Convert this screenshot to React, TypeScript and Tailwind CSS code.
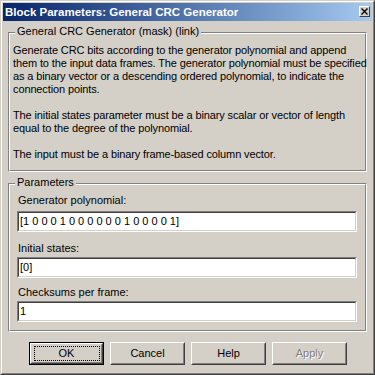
import type { ReactNode } from "react";

const FONT = "font-['Liberation_Sans',Arial,sans-serif]";

function Group({
  legend,
  className,
  children,
}: {
  legend: string;
  className: string;
  children: ReactNode;
}) {
  return (
    <div
      className={`relative border border-t-[#808080] border-l-[#808080] border-b-white border-r-white ${className}`}
    >
      <div className="h-full border border-t-white border-l-white border-b-[#808080] border-r-[#808080]">
        {children}
      </div>
      <span className="absolute left-[6px] top-[-8px] bg-[#d4d0c8] px-[2px] leading-[13px] whitespace-nowrap">
        {legend}
      </span>
    </div>
  );
}

function Edit({ value, className }: { value: string; className: string }) {
  return (
    <div
      className={`h-[21px] border border-t-[#808080] border-l-[#808080] border-b-white border-r-white ${className}`}
    >
      <div className="h-full border border-t-[#404040] border-l-[#404040] border-b-[#d4d0c8] border-r-[#d4d0c8] bg-white pl-[1px] leading-[17px] whitespace-nowrap">
        {value}
      </div>
    </div>
  );
}

function Button({
  label,
  isDefault,
  disabled,
}: {
  label: string;
  isDefault?: boolean;
  disabled?: boolean;
}) {
  const face = (
    <div className="h-full border border-t-white border-l-white border-b-[#404040] border-r-[#404040]">
      <div className="h-full border border-t-[#d4d0c8] border-l-[#d4d0c8] border-b-[#808080] border-r-[#808080] flex items-center justify-center">
        {isDefault ? (
          <div className="w-[66px] h-[15px] border border-dotted border-black flex items-center justify-center leading-[13px]">
            {label}
          </div>
        ) : (
          <span
            className={
              disabled
                ? "text-[#808080] [text-shadow:1px_1px_0_#ffffff] leading-[13px]"
                : "leading-[13px]"
            }
          >
            {label}
          </span>
        )}
      </div>
    </div>
  );
  return (
    <div className="w-[75px] h-[23px]">
      {isDefault ? (
        <div className="h-full border border-black">{face}</div>
      ) : (
        face
      )}
    </div>
  );
}

export default function App() {
  return (
    <div
      className={`w-[375px] h-[375px] bg-[#d4d0c8] text-black text-[11px] ${FONT} border border-t-[#d4d0c8] border-l-[#d4d0c8] border-b-[#404040] border-r-[#404040]`}
    >
      <div className="h-full border border-t-white border-l-white border-b-[#808080] border-r-[#808080] p-[1px] flex flex-col">
        {/* Title bar */}
        <div className="h-[18px] shrink-0 bg-gradient-to-r from-[#0a246a] to-[#a6caf0] flex items-center justify-between pl-[2px] pr-[2px]">
          <span className="text-white font-bold text-[11.5px] leading-[14px] whitespace-nowrap">
            Block Parameters: General CRC Generator
          </span>
          <div className="w-[11px] h-[11px] mb-[2px] border border-t-white border-l-white border-b-[#404040] border-r-[#404040] bg-[#d4d0c8] flex items-center justify-center">
            <svg width="7" height="7" viewBox="0 0 7 7">
              <path d="M0.5 0.5 L6.5 6.5 M6.5 0.5 L0.5 6.5" stroke="#000" strokeWidth="1.4" />
            </svg>
          </div>
        </div>

        {/* Description */}
        <Group
          legend="General CRC Generator (mask) (link)"
          className="mt-[11px] mx-[5px] h-[140px]"
        >
          <div className="pt-[10px] pl-[3px] leading-[13px] whitespace-nowrap tracking-[-0.12px]">
            <div>Generate CRC bits according to the generator polynomial and append</div>
            <div>them to the input data frames. The generator polynomial must be specified</div>
            <div>as a binary vector or a descending ordered polynomial, to indicate the</div>
            <div>connection points.</div>
            <div className="mt-[13px]">
              The initial states parameter must be a binary scalar or vector of length
            </div>
            <div>equal to the degree of the polynomial.</div>
            <div className="mt-[13px]">The input must be a binary frame-based column vector.</div>
          </div>
        </Group>

        {/* Parameters */}
        <Group legend="Parameters" className="mt-[11px] mx-[5px] h-[149px]">
          <div className="pt-[9px] pl-[7px] pr-[8px] leading-[13px]">
            <div className="pl-[1px]">Generator polynomial:</div>
            <Edit value="[1 0 0 0 1 0 0 0 0 0 0 1 0 0 0 0 1]" className="mt-[4px]" />
            <div className="pl-[1px] mt-[10px]">Initial states:</div>
            <Edit value="[0]" className="mt-[2px]" />
            <div className="pl-[1px] mt-[8px]">Checksums per frame:</div>
            <Edit value="1" className="mt-[2px]" />
          </div>
        </Group>

        {/* Buttons */}
        <div className="mt-[10px] pl-[26px] flex gap-[6px]">
          <Button label="OK" isDefault />
          <Button label="Cancel" />
          <Button label="Help" />
          <Button label="Apply" disabled />
        </div>
      </div>
    </div>
  );
}
